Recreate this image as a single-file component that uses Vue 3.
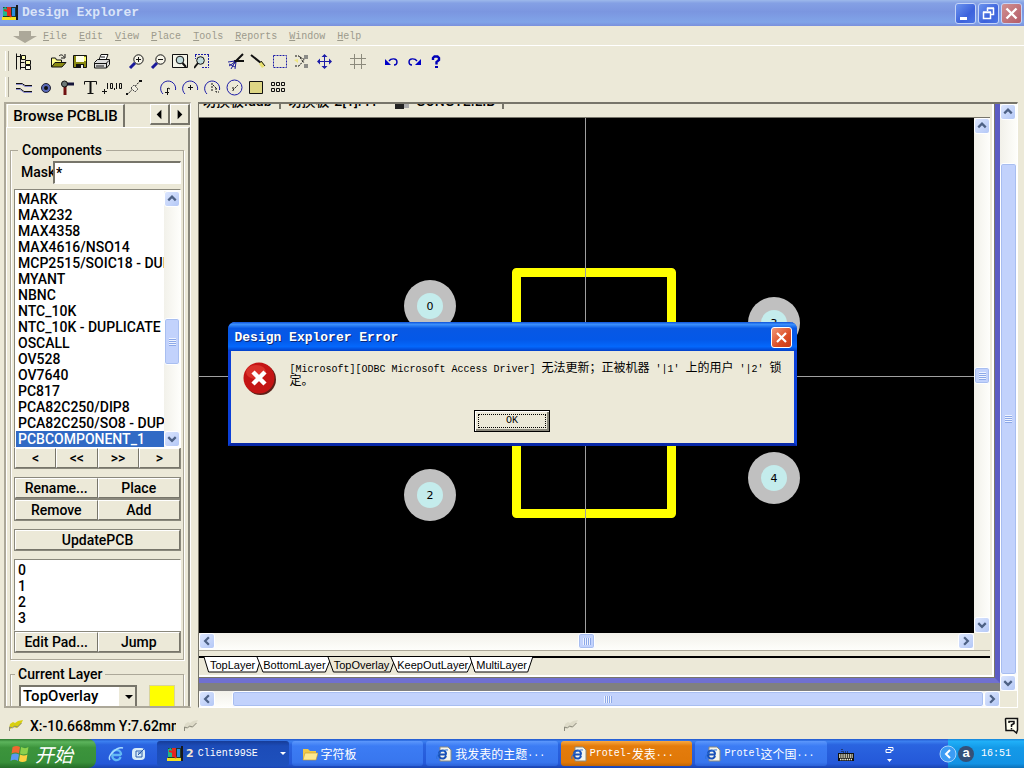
<script setup>
import { ref } from 'vue'

const menus = ['File', 'Edit', 'View', 'Place', 'Tools', 'Reports', 'Window', 'Help']

const lens = '<circle cx="10.500" cy="6.500" r="4.700" fill="#f6f4e8" stroke="#111"/><path d="M7 10L2 15" stroke="#1a1a9a" stroke-width="3"/>'
const arc = (inner) => '<path d="M3 15A7.5 7.5 0 1 1 15.5 11" fill="none" stroke="#1c1ca8"/>' + inner

const fileTools = [
  [
    { name: 'Panel', art: '<path d="M.5 .5v16M.5 3.500h4M4.500 1v15.500M4.500 9.500h4M4.500 14.500h5" stroke="#111" fill="none"/><path d="M5.500 2.500h4v4h-4zM9.500 7.500h5v4h-5z" fill="#ffffb0" stroke="#111"/><path d="M9.500 12.500h5v4h-5z" fill="#ffe" stroke="#111"/>' }
  ],
  [
    { name: 'Open', art: '<path d="M1.500 14V5h4l1 2h5v3" fill="#ffff90" stroke="#111"/><path d="M1.500 14L5 9.500h11L12 14z" fill="#8a8a10" stroke="#111"/><path d="M9 3c2-2 4-1 5 1M15 1v4h-4" fill="none" stroke="#111"/>' },
    { name: 'Save', art: '<path d="M1.500 2.500h13v12h-13z" fill="#8a8a10" stroke="#111"/><path d="M4 3h8v6H4z" fill="#ffffe8"/><path d="M4 11h8v4H4z" fill="#111"/><path d="M9 12h2v3H9z" fill="#eee"/><path d="M12 4h2v4h-2z" fill="#ff6"/>' },
    { name: 'Print', art: '<path d="M5 7l2-5.500h7L12 7" fill="#fff" stroke="#111"/><path d="M.5 9.500l3-3h12v5l-3 3.500h-12z" fill="#ddd" stroke="#111"/><path d="M1 10.500h11l3-3M12.500 10v5M7 4h4M2 13h8" stroke="#111" fill="none"/>' }
  ],
  [
    { name: 'Zoom in', art: lens + '<path d="M8 6.500h5M10.500 4v5" stroke="#111"/>' },
    { name: 'Zoom out', art: lens + '<path d="M8 6.500h5" stroke="#111"/>' },
    { name: 'Fit document', art: '<path d="M.5 1.500h15v13H.5z" fill="#f4f4e8" stroke="#111"/><circle cx="8" cy="7" r="3.800" fill="#c2dcdc" stroke="#111"/><path d="M10.500 10l3.500 4" stroke="#111" stroke-width="2"/>' },
    { name: 'Fit area', art: '<path d="M1 1.500h14M14.500 2v13M1.500 2v4M8 14.500h7" stroke="#1c1ca8" stroke-dasharray="2 1" fill="none"/><circle cx="6.500" cy="7.500" r="3.800" fill="#c2dcdc" stroke="#111"/><path d="M4 10l-4 5" stroke="#111" stroke-width="2"/>' }
  ],
  [
    { name: 'Cut', art: '<path d="M15 1L6 10M16 8H6" stroke="#111" stroke-width="2"/><path d="M7 8L0 9M7 9l-6 4M7 9l-4 7M8 9l-1 7M1 11l6 3" stroke="#1c1c9a" fill="none"/>' },
    { name: 'Paste', art: '<path d="M1 2l10 8" stroke="#111" stroke-width="2"/><path d="M9 11l3-3 3 5-3 2z" fill="#e8e070"/><path d="M11 8l4 5" stroke="#111"/>' },
    { name: 'Select', art: '<path d="M1.500 2.500h13v12h-13z" fill="none" stroke="#1c1ca8" stroke-dasharray="2 1"/>' },
    { name: 'Deselect', art: '<path d="M1 3h4l5 7M1 13h4l5-6M6 4l5 3" stroke="#111" fill="none" stroke-dasharray="2 1"/><path d="M10 2h4v4h-4zM10 11h4v4h-4z" fill="#8c8c88"/><path d="M0 7l4-1v4z" fill="#eee680"/>' },
    { name: 'Move', art: '<path d="M8.500 2v13M2 8.500h13" stroke="#1c1ca8"/><path d="M8.500 1l3 3h-6zM8.500 16l3-3h-6zM1 8.500l3-3v6zM16 8.500l-3-3v6z" fill="#1c1ca8"/>' }
  ],
  [
    { name: 'Grid', art: '<path d="M4.500 1v15M11.500 1v15M0 5.500h16M0 11.500h16" stroke="#8c8a7c" fill="none"/>' }
  ],
  [
    { name: 'Undo', art: '<path d="M5 8C7 5 13 5 13 9c0 2-1 3-3 3" fill="none" stroke="#0000b8" stroke-width="1.400"/><path d="M1 6v6h6z" fill="#0000c8"/>' },
    { name: 'Redo', art: '<path d="M11 8C9 5 3 5 3 9c0 2 1 3 3 3" fill="none" stroke="#0000b8" stroke-width="1.400"/><path d="M15 6v6H9z" fill="#0000c8"/>' },
    { name: 'Help', art: '<path d="M5 7V5l1.500-1.500h3L11 5v2L8.500 9v2.500" fill="none" stroke="#0000b8" stroke-width="2.400"/><path d="M7 13h3v2H7z" fill="#0000b8"/>' }
  ]
]

const drawTools = [
  [
    { name: 'Track', art: '<path d="M0 4.500h6l3 2h7M0 9.500h4l4 3h8" stroke="#111" fill="none"/><path d="M0 5.500h6l3 2h7M0 10.500h4l4 3h8" stroke="#8c8cd0" fill="none"/>' },
    { name: 'Pad', art: '<circle cx="8" cy="9" r="4.500" fill="#5a6ab8" stroke="#223"/><circle cx="8" cy="9" r="2" fill="#111"/>' },
    { name: 'Via', art: '<path d="M3 5h11" stroke="#15153a" stroke-width="3"/><path d="M5 5v11" stroke="#701010" stroke-width="3"/><circle cx="4.500" cy="5" r="3" fill="#6c7878" stroke="#111"/>' },
    { name: 'String', art: '<path d="M2.500 5.500v-3h12v3M5.500 14.500h6" stroke="#111" fill="none"/><path d="M7.500 3h2v12h-2z" fill="#111"/>' },
    { name: 'Coordinate', wide: true, art: '<path d="M0 12.500h5M2.500 10v5M5.500 4v6M8.500 4.500h2v5h-2zM12.500 9v2M14.500 4v6M17.500 4.500h2v5h-2z" stroke="#111" fill="none"/>' },
    { name: 'Dimension', art: '<path d="M1 16L15 1" stroke="#111" stroke-dasharray="2 1"/><path d="M5 9l3-3 4 4-3 3z" fill="#f2f0e2" stroke="#444" stroke-dasharray="2 1"/><path d="M0 14h2v2H0zM13 1h3v2h-3z" fill="#111"/>' }
  ],
  [
    { name: 'Arc by edge', art: arc('<path d="M7.500 9v7M5 13.500h4M8 9l2 1" stroke="#111" fill="none"/>') },
    { name: 'Arc by center', art: arc('<path d="M8.500 6v5M6 8.500h5" stroke="#111" fill="none"/>') },
    { name: 'Arc any angle', art: arc('<path d="M8 4v9M9 6l4 4M12 9v4h3" stroke="#111" fill="none" stroke-dasharray="2 1"/>') },
    { name: 'Full circle', art: '<circle cx="8.500" cy="8.500" r="7.500" fill="none" stroke="#1c1ca8"/><path d="M7 11l5-5M7 8v4" stroke="#111" stroke-dasharray="2 1" fill="none"/>' },
    { name: 'Fill', art: '<path d="M1.500 2.500h13v12h-13z" fill="#ded684" stroke="#111"/>' },
    { name: 'Array', art: '<path d="M1.500 3.500h3v3h-3zM6.500 3.500h3v3h-3zM11.500 3.500h3v3h-3zM1.500 9.500h3v3h-3zM6.500 9.500h3v3h-3zM11.500 9.500h3v3h-3z" fill="none" stroke="#111"/>' }
  ]
]

const components = ['MARK', 'MAX232', 'MAX4358', 'MAX4616/NSO14', 'MCP2515/SOIC18 - DUPLICATE', 'MYANT', 'NBNC', 'NTC_10K',
  'NTC_10K - DUPLICATE', 'OSCALL', 'OV528', 'OV7640', 'PC817', 'PCA82C250/DIP8', 'PCA82C250/SO8 - DUPLICATE', 'PCBCOMPONENT_1']
const selected = ref('PCBCOMPONENT_1')
const mask = ref('*')
const layer = ref('TopOverlay')
const pads = ['0', '1', '2', '3']
const layers = ['TopLayer', 'BottomLayer', 'TopOverlay', 'KeepOutLayer', 'MultiLayer']
const placed = [
  { n: '0', x: 231, y: 188 },
  { n: '3', x: 575, y: 205 },
  { n: '2', x: 231, y: 377 },
  { n: '4', x: 575, y: 360 }
]
</script>

<template>
  <div class="desktop">
    <svg class="defs" aria-hidden="true">
      <symbol id="g-up" viewBox="0 0 15 15"><path d="M3.500 9L7.500 5l4 4" fill="none" stroke="#4d6185" stroke-width="2.400" /></symbol>
      <symbol id="g-down" viewBox="0 0 15 15"><path d="M3.500 5.500l4 4 4-4" fill="none" stroke="#4d6185" stroke-width="2.400" /></symbol>
      <symbol id="g-left" viewBox="0 0 15 15"><path d="M9.500 3.500l-4 4 4 4" fill="none" stroke="#4d6185" stroke-width="2.400" /></symbol>
      <symbol id="g-right" viewBox="0 0 15 15"><path d="M5.500 3.500l4 4-4 4" fill="none" stroke="#4d6185" stroke-width="2.400" /></symbol>
      <symbol id="g-client" viewBox="0 0 16 16">
        <path d="M14 0h2v15H2v-2h12z" fill="#181818" /><path d="M1 2h13v10H1z" fill="#203830" /><path d="M0 12h14v3H0z" fill="#f4e020" />
        <path d="M1 3l3-1 1 2v7H1z" fill="#20b888" /><path d="M5 2h4v9H5z" fill="#e02c20" /><path d="M10 3h3v8h-3z" fill="#2c8ce0" />
        <path d="M2 5l4 1 3 6" stroke="#e82020" stroke-width="2" fill="none" />
      </symbol>
      <symbol id="g-ie" viewBox="0 0 16 16">
        <path d="M13 9H4.500a4 4 0 0 0 8 2M4 8a4.500 4.500 0 0 1 9 1" fill="none" stroke="#62b8f4" stroke-width="2.400" />
        <path d="M2 14C-1 10 9 0 15 2" fill="none" stroke="#a8dcff" stroke-width="1.400" />
      </symbol>
      <symbol id="g-page" viewBox="0 0 16 16">
        <path d="M4 1h8l3 3v11H4z" fill="#f6f6ec" stroke="#8a8a80" />
        <path d="M10 8.500H3a3.500 3.500 0 0 0 7 1M3 7.500a3.500 3.500 0 0 1 7 1" fill="none" stroke="#1850b8" stroke-width="2" />
        <path d="M1 13C-1 9 7 3 12 4" fill="none" stroke="#2c70d8" />
      </symbol>
      <symbol id="g-pen" viewBox="0 0 16 14">
        <path d="M1 10l1-5 3-2 2 1 3-2 5-1-2 4-4 4-4-1-4 3z" fill="currentColor" /><path d="M1.500 12V8l3 1 2-2 3 1 4-4" fill="none" stroke="#8a887a" />
      </symbol>
    </svg>

    <header class="titlebar">
      <svg class="i16"><use href="#g-client" /></svg>
      <h1>Design Explorer</h1>
      <button class="cap" aria-label="Minimize"><svg viewBox="0 0 19 19"><path d="M4 13h7v3H4z" fill="#fff" /></svg></button>
      <button class="cap" aria-label="Restore"><svg viewBox="0 0 19 19"><path d="M4.500 8.500h7v6h-7zM4 8h8M8.500 7V4.500h6v6H12M8 4h7" fill="none" stroke="#fff" stroke-width="1.500" /></svg></button>
      <button class="cap close" aria-label="Close"><svg viewBox="0 0 19 19"><path d="M4.500 4.500l10 10M14.500 4.500l-10 10" stroke="#fff" stroke-width="2.400" /></svg></button>
    </header>

    <nav class="menubar">
      <svg class="drop" viewBox="0 0 24 12"><path d="M6 0h12v5h6l-12 7L0 5h6z" fill="#aca899" /></svg>
      <a v-for="m in menus" :key="m" href="#"><u>{{ m[0] }}</u>{{ m.slice(1) }}</a>
    </nav>

    <div class="toolbars">
      <div v-for="(bar, b) in [fileTools, drawTools]" :key="b" class="bar">
        <div v-for="(group, g) in bar" :key="g" class="group">
          <button v-for="t in group" :key="t.name" class="tool" :aria-label="t.name">
            <svg :class="{ wide: t.wide }" :viewBox="t.wide ? '0 0 21 17' : '0 0 17 17'" v-html="t.art"></svg>
          </button>
        </div>
      </div>
    </div>

    <div class="work">
      <aside class="side">
        <div class="tabrow">
          <button class="tab">Browse PCBLIB</button>
          <span class="arrows">
            <button aria-label="Previous tab"><svg viewBox="0 0 18 18"><path d="M11 4v10L6 9z" /></svg></button>
            <button aria-label="Next tab"><svg viewBox="0 0 18 18"><path d="M7 4v10l5-5z" /></svg></button>
          </span>
        </div>
        <div class="pane">
          <fieldset class="comp">
            <legend>Components</legend>
            <div class="mask"><label for="mask">Mask</label><input id="mask" v-model="mask"></div>
            <div class="listbox">
              <ul role="listbox" aria-label="Components">
                <li v-for="c in components" :key="c" role="option" :aria-selected="c === selected" :class="{ on: c === selected }" @click="selected = c">{{ c }}</li>
              </ul>
              <div class="vbar">
                <button aria-label="Scroll list up"><svg><use href="#g-up" /></svg></button>
                <i class="space s1"></i><i class="thumb v t1"></i><i class="space s2"></i>
                <button aria-label="Scroll list down"><svg><use href="#g-down" /></svg></button>
              </div>
            </div>
            <div class="btns nav"><button>&lt;</button><button>&lt;&lt;</button><button>&gt;&gt;</button><button>&gt;</button></div>
            <div class="btns edit"><button>Rename...</button><button>Place</button></div>
            <div class="btns join"><button>Remove</button><button>Add</button></div>
            <div class="btns"><button>UpdatePCB</button></div>
            <ul class="pads" role="listbox" aria-label="Pads"><li v-for="p in pads" :key="p" role="option">{{ p }}</li></ul>
            <div class="btns join"><button>Edit Pad...</button><button>Jump</button></div>
          </fieldset>
          <fieldset class="layer">
            <legend>Current Layer</legend>
            <div class="pick">
              <select v-model="layer" aria-label="Current Layer"><option v-for="l in layers" :key="l">{{ l }}</option></select>
              <span class="swatch"></span>
            </div>
          </fieldset>
        </div>
      </aside>

      <main class="mdi">
        <section class="child">
          <div class="doctabs">
            <a href="#">切换板.ddb</a><a href="#" class="plain">切换板-2[1].41</a><a href="#"><svg viewBox="0 0 16 12"><path d="M1 3h9v9H1z" fill="#222" /><path d="M10 6h5v5h-5z" fill="#aaa" /></svg>GONGYE.LIB</a>
          </div>
          <div class="editor">
            <svg class="canvas" viewBox="0 0 775 515" role="img" aria-label="Footprint">
              <path d="M386.500 0v515M0 258.500h775" stroke="#a0a0a0" />
              <rect x="317.500" y="154.500" width="155" height="241" fill="none" stroke="#ff0" stroke-width="9" stroke-linejoin="round" />
              <path d="M386.500 0v515" stroke="#a0a0a0" />
              <g v-for="p in placed" :key="p.n">
                <circle :cx="p.x" :cy="p.y" r="26" fill="#c0c0c0" /><circle :cx="p.x" :cy="p.y" r="13" fill="#c4ecec" />
                <text :x="p.x" :y="p.y + 4" text-anchor="middle">{{ p.n }}</text>
              </g>
            </svg>
            <div class="vbar">
              <button aria-label="Scroll up"><svg><use href="#g-up" /></svg></button>
              <i class="space"></i><i class="thumb v small"></i><i class="space"></i>
              <button aria-label="Scroll down"><svg><use href="#g-down" /></svg></button>
            </div>
            <div class="hbar">
              <button aria-label="Scroll left"><svg><use href="#g-left" /></svg></button>
              <i class="space"></i><i class="thumb h small"></i><i class="space"></i>
              <button aria-label="Scroll right"><svg><use href="#g-right" /></svg></button>
            </div>
          </div>
          <div class="layertabs">
            <button v-for="l in layers" :key="l" :class="{ on: l === layer }" @click="layer = l">
              <svg preserveAspectRatio="none" viewBox="0 0 100 16"><path d="M0 0l8 15h84l8-15" vector-effect="non-scaling-stroke" /></svg>
              <span>{{ l }}</span>
            </button>
          </div>
        </section>
        <div class="vbar outer">
          <button aria-label="Scroll window up"><svg><use href="#g-up" /></svg></button>
          <i class="space s3"></i><i class="thumb v t3"></i>
          <button aria-label="Scroll window down"><svg><use href="#g-down" /></svg></button>
        </div>
        <div class="hbar outer">
          <button aria-label="Scroll window left"><svg><use href="#g-left" /></svg></button>
          <i class="space s4"></i><i class="thumb h t4"></i>
          <button aria-label="Scroll window right"><svg><use href="#g-right" /></svg></button>
        </div>
      </main>
    </div>

    <footer class="status">
      <svg class="pen y"><use href="#g-pen" /></svg>
      <output>X:-10.668mm Y:7.62mm</output>
      <svg class="pen"><use href="#g-pen" /></svg>
      <svg class="pen mid"><use href="#g-pen" /></svg>
      <button aria-label="What's this"><svg viewBox="0 0 16 18"><path d="M2 1.500h11.500V13l-1 3-3-2.500H2L1.500 2z" fill="#fffff0" stroke="#111" stroke-width="1.500" /><path d="M5 6V4.500h5v2L7.500 8v2M7.500 11v1.500" fill="none" stroke="#111" stroke-width="1.500" /></svg></button>
    </footer>

    <div class="taskbar">
      <button class="start">
        <svg viewBox="0 0 18 17"><path d="M2 2q4-2 7 0L8 8Q5 6 1 8z" fill="#f06830" /><path d="M10 2q4 2 7 0l-1 6q-4 2-7 0z" fill="#8cd04c" /><path d="M1 9q4-2 7 0l-1 6q-3-2-7 0z" fill="#5c98f0" /><path d="M9 9q4 2 7 0l-1 6q-4 2-7 0z" fill="#fcd040" /></svg>
        开始
      </button>
      <div class="quick">
        <button aria-label="Internet Explorer"><svg class="i16"><use href="#g-ie" /></svg></button>
        <button aria-label="Show desktop"><svg class="i16" viewBox="0 0 16 16"><rect x="1" y="2" width="13" height="12" rx="4" fill="#d8ecf8" /><path d="M5 5h6v6H5zM7 9l6-6M7 7h3" fill="none" stroke="#2a5cac" /></svg></button>
      </div>
      <div class="tasks">
        <button class="active"><svg class="i16"><use href="#g-client" /></svg><b>2</b> <span>Client99SE</span><i class="caret"></i></button>
        <button><svg class="i16" viewBox="0 0 16 16"><path d="M1 3h5l2 2h6v9H1z" fill="#f0c848" /><path d="M3 7h13l-2 7H1z" fill="#fce890" stroke="#c89828" stroke-width=".6" /></svg><span class="cjk">字符板</span></button>
        <button><svg class="i16"><use href="#g-page" /></svg><span class="cjk">我发表的主题</span><span>...</span></button>
        <button class="alert"><svg class="i16"><use href="#g-page" /></svg><span>Protel-</span><span class="cjk">发表</span><span>...</span></button>
        <button><svg class="i16"><use href="#g-page" /></svg><span>Protel</span><span class="cjk">这个国</span><span>...</span></button>
      </div>
      <div class="lang">
        <svg viewBox="0 0 16 13"><path d="M4 0v3h7" fill="none" stroke="#111" stroke-dasharray="1 1" /><path d="M0 4h16v8H0z" fill="#111" /><path d="M1 6h14M1 8h14M2 10.500h12" stroke="#f6f4d8" stroke-dasharray="1.500 .7" stroke-width="1.300" /></svg>
        <svg viewBox="0 0 10 16"><path d="M1 3.500h5v3H1zM3 1.500h5v3H6" fill="none" stroke="#fff" /><path d="M2 13h5l-2.500 3z" fill="#fff" /></svg>
      </div>
      <div class="tray">
        <button aria-label="Show hidden icons"><svg viewBox="0 0 18 18"><circle cx="9" cy="9" r="8" fill="#3c9cf4" stroke="#a8d4fc" /><path d="M11 5L7 9l4 4" fill="none" stroke="#fff" stroke-width="2" /></svg></button>
        <span class="badge">a</span>
        <time>16:51</time>
      </div>
    </div>

    <div class="overlay">
      <section class="dialog" role="alertdialog" aria-labelledby="dt">
        <header><h2 id="dt">Design Explorer Error</h2>
          <button aria-label="Close dialog"><svg viewBox="0 0 19 19"><path d="M5 5l9 9M14 5l-9 9" stroke="#fff" stroke-width="2.200" /></svg></button>
        </header>
        <div class="body">
          <svg class="err" viewBox="0 0 34 34"><circle cx="17.500" cy="17.500" r="15.500" fill="#5c2018" /><circle cx="16" cy="16" r="15.500" fill="#c41414" /><ellipse cx="13" cy="10" rx="10" ry="7" fill="#e84438" opacity=".6" /><path d="M10 10l12 12M22 10L10 22" stroke="#fff" stroke-width="4.500" /></svg>
          <p>[Microsoft][ODBC Microsoft Access Driver] <span class="cjk">无法更新；正被机器</span> ′|1′ <span class="cjk">上的用户</span> ′|2′ <span class="cjk">锁定。</span></p>
        </div>
        <button class="ok"><span>OK</span></button>
      </section>
    </div>
  </div>
</template>

<style>
html, body { margin: 0; height: 100%; overflow: hidden; }
</style>

<style scoped>
* { box-sizing: border-box; }
button { font: inherit; color: inherit; padding: 0; margin: 0; border: 0; background: none; }
ul { list-style: none; margin: 0; padding: 0; }
svg { display: block; flex: none; }
a { color: inherit; text-decoration: none; }
h1, h2, p { margin: 0; }
.defs { position: absolute; width: 0; height: 0; }
.desktop { height: 100vh; display: flex; flex-direction: column; background: #ece9d8; font: 10px/14px "Liberation Mono", "Noto Sans CJK SC", monospace; color: #000; overflow: hidden; }
.i16 { width: 16px; height: 16px; }
.cjk { font: 12px/12px "Noto Sans CJK SC", sans-serif; }

.titlebar { flex: none; height: 26px; display: flex; align-items: center; gap: 2px; padding: 0 2px; background: linear-gradient(#9db9eb 0, #84a0e4 12%, #7b96e0 45%, #80a4e8 85%, #7a90dc 100%); }
.titlebar h1 { flex: 1; margin-left: 2px; font: bold 13px/20px "Liberation Mono", monospace; color: #d9e4f8; }
.cap { width: 21px; height: 21px; border: 1px solid #c4d4f8; border-radius: 3px; background: linear-gradient(135deg, #6c94ee, #3c62dc 60%, #4a74e4); }
.close { background: linear-gradient(135deg, #d09090, #b45c68); }

.menubar { flex: none; height: 20px; display: flex; align-items: center; gap: 12px; padding: 2px 13px 0; color: #9c9a8c; border-bottom: 1px solid #fff; }
.drop { width: 24px; height: 12px; margin-right: -6px; }

.toolbars { flex: none; height: 56px; padding-top: 2px; }
.bar { height: 26px; display: flex; gap: 12px; align-items: center; padding-left: 13px; position: relative; }
.bar::before { content: ""; position: absolute; left: 5px; top: 3px; bottom: 3px; width: 2px; border-right: 1px solid #aca899; border-left: 1px solid #fff; }
.group { display: flex; }
.tool { width: 22px; height: 22px; display: grid; place-items: center; }
.tool svg { width: 17px; height: 17px; }
.tool svg.wide { width: 21px; }

.work { flex: 1; min-height: 0; display: flex; gap: 7px; padding: 0 6px 0 4px; }
.side { flex: none; width: 187px; display: flex; flex-direction: column; border: 2px solid #aca899; border-right: 1px solid #fff; border-bottom: 2px solid #aca899; overflow: hidden; font: 500 14px/16px Roboto, "Liberation Sans", sans-serif; }
.tabrow { flex: none; display: flex; justify-content: space-between; height: 23px; padding-left: 1px; }
.tab { width: 118px; border-right: 2px solid #77756a; border-top: 1px solid #fff; border-left: 1px solid #fff; font-size: 15px; text-align: center; }
.arrows { display: flex; }
.arrows button { width: 20px; height: 21px; border: 1px solid #fff; border-right: 2px solid #77756a; border-bottom: 2px solid #77756a; }
.pane { flex: 1; min-height: 0; overflow: hidden; border-left: 1px solid #fff; border-top: 1px solid #fff; border-right: 2px solid #8a887c; padding: 14px 4px 0 3px; }
fieldset { margin: 0; min-width: 0; border: 1px solid #aca899; outline: 0; box-shadow: inset 1px 0 #fff, 1px 1px #fff; }
legend { font-size: 14px; line-height: 16px; padding: 0 4px; }
.comp { padding: 3px 2px 6px 3px; }
.comp legend { margin-left: 4px; }
.mask { display: flex; height: 23px; align-items: stretch; }
.mask label { width: 39px; padding-left: 7px; line-height: 22px; font-size: 14px; overflow: hidden; }
.mask input { flex: 1; min-width: 0; border: 2px solid #77756a; border-right: 1px solid #fff; border-bottom: 1px solid #fff; background: #fff; font: inherit; padding: 0 1px; outline: none; border-radius: 0; }
.listbox { display: flex; margin-top: 5px; border: 1px solid #8a887c; border-right-color: #fff; border-bottom-color: #fff; background: #fff; padding: 1px 0 0 1px; }
.listbox ul { flex: 1; min-width: 0; overflow: hidden; }
li { height: 16px; padding-left: 2px; line-height: 16px; white-space: nowrap; overflow: hidden; }
li.on { background: #316ac5; color: #fff; }
.btns { display: flex; margin-top: 8px; font-size: 14px; border: 1px solid #8a887c; }
.btns button { flex: 1; height: 20px; line-height: 18px; border: 1px solid #fff; border-right-color: #77756a; border-bottom-color: #77756a; }
.nav { margin-top: 0; border-top: 0; }
.join { margin-top: 0; }
.pads { margin-top: 8px; height: 72px; padding: 2px 1px; background: #fff; border: 1px solid #8a887c; border-right-color: #fff; border-bottom-color: #fff; }
.layer { margin-top: 6px; padding: 2px 8px 10px; }
.layer legend { padding: 0 3px; margin-left: -4px; }
.pick { position: relative; display: flex; gap: 12px; align-items: flex-start; margin-top: 1px; }
.pick::after { content: ""; position: absolute; left: 106px; top: 10px; border: 4px solid transparent; border-top-color: #000; border-bottom: 0; pointer-events: none; }
select { width: 119px; height: 24px; appearance: none; border: 2px solid #77756a; border-radius: 0; padding: 0 2px 2px; font: 500 15px/18px Roboto, sans-serif; color: #000; outline: none; background: #fff linear-gradient(#ece9d8, #ece9d8) right / 16px 100% no-repeat; }
.swatch { width: 26px; height: 24px; background: #ff0; border: 1px solid #d8d49c; }

.mdi { flex: 1; min-width: 0; display: grid; grid-template: minmax(0, 1fr) 16px / minmax(0, 1fr) 17px; border: 1px solid #77756a; border-top-width: 2px; border-bottom: 1px solid #fff; border-right-color: #fff; background: #ece9d8; }
.child { display: flex; flex-direction: column; min-width: 0; min-height: 0; margin-bottom: 8px; border-right: 5px solid #5c5cc4; border-bottom: 5px solid #7070d0; box-shadow: 0 8px #808080, inset -1px -1px #77756a, inset -3px -3px #fff; padding: 0 5px 5px 0; }
.doctabs { flex: none; display: flex; align-items: flex-end; height: 14px; padding-bottom: 8px; border-bottom: 1px solid #77756a; overflow: hidden; font: 500 14px/16px Roboto, "Noto Sans CJK SC", sans-serif; }
.doctabs a { display: flex; align-items: flex-end; gap: 6px; height: 17px; padding: 0 7px 0 3px; border-right: 2px solid #77756a; white-space: nowrap; }
.doctabs a + a { padding-left: 7px; }
.doctabs .plain { border-right-color: transparent; }
.doctabs svg { width: 16px; height: 12px; }
.editor { flex: 1; min-height: 0; display: grid; grid-template: minmax(0, 1fr) 17px / minmax(0, 1fr) 16px; border-bottom: 1px solid #aca899; }
.canvas { width: 100%; height: 100%; background: #000; }
.canvas text { font: 11px "DejaVu Sans", sans-serif; }
.vbar { display: flex; flex-direction: column; width: 16px; min-height: 0; background: linear-gradient(90deg, #f2f1ea, #fefefb); }
.hbar { display: flex; height: 17px; min-width: 0; background: linear-gradient(#f2f1ea, #fefefb); }
.vbar button, .hbar button { flex: none; width: 16px; height: 16px; border: 1px solid #fff; border-radius: 3px; background: linear-gradient(135deg, #dce6fe, #b4c8f6); display: grid; place-items: center; }
.vbar svg, .hbar svg { width: 14px; height: 14px; }
.space { flex: 1; }
.thumb { flex: none; border: 1px solid #fff; border-radius: 3px; background: #c2d2fc; display: grid; place-items: center; box-shadow: inset 0 0 0 1px #a8bef0; }
.thumb::before { content: ""; width: 7px; height: 8px; background: repeating-linear-gradient(#eef3ff 0 1px, #8ca8e8 1px 2px); }
.thumb.h::before { width: 8px; height: 7px; background: repeating-linear-gradient(90deg, #eef3ff 0 1px, #8ca8e8 1px 2px); }
.v.small { height: 17px; }
.h.small { width: 17px; height: 16px; }
.t1 { height: 47px; }
.s1 { flex: 111; }
.s2 { flex: 66; }
.vbar.outer { width: 17px; }
.hbar.outer { height: 16px; }
.s3 { flex: 43; }
.t3 { flex: 512; }
.s4 { flex: 17; }
.t4 { flex: 752; height: 16px; }
.layertabs { flex: none; display: flex; height: 17px; margin-top: 5px; padding-left: 5px; border-top: 2px solid #000; font: 11px/14px "Liberation Sans", sans-serif; }
.layertabs button { position: relative; height: 15px; padding: 0 6px; margin-right: -4px; margin-top: -1px; }
.layertabs svg { position: absolute; inset: 0; width: 100%; height: 16px; overflow: visible; fill: #fff; stroke: #000; }
.layertabs .on svg { fill: #ece9d8; }
.layertabs span { position: relative; }

.status { flex: none; height: 31px; display: flex; align-items: center; padding: 4px 4px 0 8px; font: 500 14px/18px Roboto, sans-serif; }
.pen { width: 16px; height: 14px; color: #dedbc8; }
.pen.y { color: #d8d010; }
.pen.mid { margin-left: 364px; }
.status output { width: 146px; margin: 0 7px 0 6px; white-space: nowrap; overflow: hidden; }
.status button { margin-left: auto; }
.status button svg { width: 16px; height: 18px; }

.taskbar { flex: none; height: 29px; display: flex; align-items: stretch; color: #fff; background: linear-gradient(#2258cc 0, #3c80f0 8%, #2a64e0 20%, #2458d8 85%, #1a44b0); }
.start { width: 96px; display: flex; align-items: center; gap: 5px; padding-left: 10px; border-radius: 0 8px 8px 0; background: linear-gradient(#2e7c30 0, #5cb45c 10%, #3c943c 30%, #38903a 80%, #256c28); font: italic 19px/20px "Noto Sans CJK SC", sans-serif; }
.start svg { width: 20px; height: 18px; }
.quick { display: flex; align-items: center; gap: 7px; padding-left: 12px; }
.tasks { flex: 1; display: flex; gap: 3px; padding: 2px 0 2px 10px; min-width: 0; }
.tasks button { flex: 1; min-width: 0; display: flex; align-items: center; padding-left: 10px; border-radius: 3px; white-space: nowrap; background: linear-gradient(#5c98fc, #3c7cf4 20%, #3876ee 85%, #2c62d8); }
.tasks .i16 { margin-right: 3px; }
.tasks .active { background: linear-gradient(#163c98, #1c4cb8 20%, #1e50bc); }
.tasks b { font: bold 11px/14px "DejaVu Sans", sans-serif; margin-right: 4px; color: #f4e4d0; }
.tasks .alert { background: linear-gradient(#f8a840, #e47c0c 20%, #e07808 85%, #c06404); }
.caret { margin: 0 3px 0 auto; border: 3px solid transparent; border-top-color: #fff; border-bottom: 0; }
.lang { width: 113px; display: flex; align-items: center; gap: 31px; padding-left: 11px; }
.lang svg:first-child { width: 16px; height: 13px; margin-top: 4px; }
.lang svg:last-child { width: 10px; height: 16px; }
.tray { width: 84px; display: flex; align-items: center; border-left: 8px solid transparent; background: linear-gradient(#1684d8 0, #20b0f8 8%, #149ae8 30%, #1292e4 85%, #0c70b8) padding-box; }
.tray button { margin-left: -9px; }
.tray button svg { width: 18px; height: 18px; }
.badge { width: 16px; height: 16px; margin-left: 1px; border-radius: 8px; background: #345078; font: bold 13px/14px "Liberation Sans", sans-serif; text-align: center; }
.tray time { margin-left: 7px; }

.overlay { position: fixed; inset: 0; display: grid; place-items: center; pointer-events: none; }
.dialog { pointer-events: auto; width: 569px; max-width: 100%; height: 124px; display: flex; flex-direction: column; border: 3px solid #0c40d8; border-top: 0; border-bottom-color: #0828a8; border-radius: 7px 7px 0 0; background: #ece9d8; }
.dialog header { flex: none; height: 29px; margin: 0 -3px; padding: 2px 5px 0 7px; display: flex; align-items: center; border-radius: 7px 7px 0 0; background: linear-gradient(#0c50d8 0, #3c90fc 8%, #0858e4 22%, #0458e8 60%, #0468fc 85%, #0440c8); }
.dialog h2 { flex: 1; font: bold 13px/20px "Liberation Mono", monospace; color: #fff; text-shadow: 1px 1px #0a2878; }
.dialog header button { width: 21px; height: 21px; border: 1px solid #fff; border-radius: 3px; background: linear-gradient(135deg, #f09878, #dc4c24 60%, #c83c18); }
.body { display: flex; gap: 13px; padding: 11px 11px 0 12px; height: 59px; }
.err { width: 34px; height: 34px; }
.body p { margin-top: 1px; flex: 1; line-height: 12px; }
.body .cjk { line-height: 8px; }
.ok { flex: none; align-self: center; width: 76px; height: 22px; border: 1px solid #000; box-shadow: inset 1px 1px #fff, inset -2px -2px #8a887c; padding: 3px; background: #ece9d8; }
.ok span { display: block; height: 14px; border: 1px dotted #000; line-height: 12px; }
</style>
